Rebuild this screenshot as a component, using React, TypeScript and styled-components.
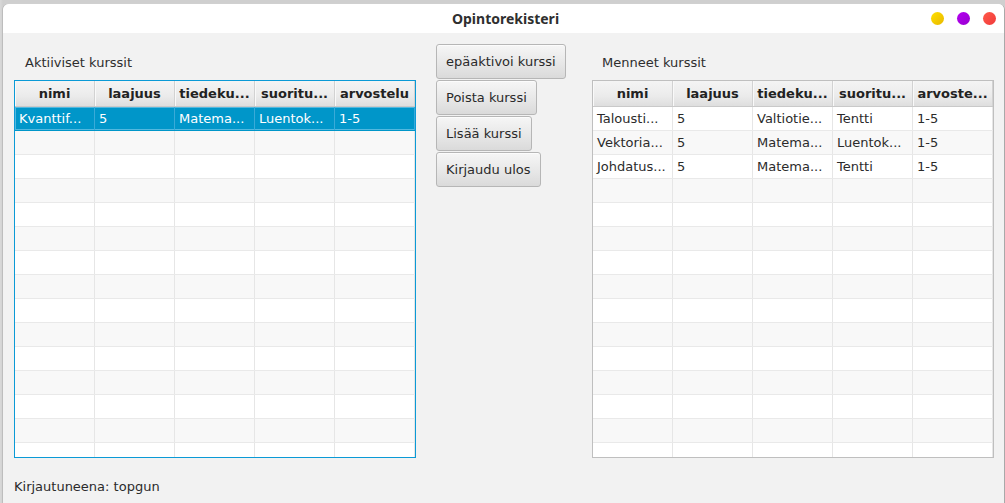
import React from "react";
import styled, { createGlobalStyle } from "styled-components";

const GlobalStyle = createGlobalStyle`
  html, body { margin: 0; padding: 0; }
  body {
    background: #dcdcdc;
    font-family: "DejaVu Sans", "Liberation Sans", sans-serif;
  }
  * { box-sizing: border-box; }
`;

const Desktop = styled.div`
  width: 1005px;
  height: 503px;
  padding: 4px 0 0 3px;
  background: linear-gradient(90deg, #d9d9d9 0, #cfcfcf 3px);
  overflow: hidden;
`;

const Window = styled.div`
  width: 1002px;
  height: 499px;
  display: flex;
  flex-direction: column;
  border-radius: 6px 6px 0 0;
  overflow: hidden;
  border-right: 1px solid #a9a9a9;
  box-shadow: -1px 0 0 #bdbdbd, 0 -1px 0 #d0d0d0;
  background: #f2f2f2;
`;

const TitleBar = styled.div`
  height: 29px;
  flex: none;
  background: #ffffff;
  display: grid;
  grid-template-columns: 1fr auto 1fr;
  align-items: center;
`;

const Title = styled.div`
  grid-column: 2;
  font-family: "Noto Sans", "DejaVu Sans", sans-serif;
  font-weight: 700;
  font-size: 14px;
  color: #2f2f2f;
  padding-left: 4px;
`;

const Controls = styled.div`
  grid-column: 3;
  justify-self: end;
  display: flex;
  gap: 13px;
  padding-right: 8px;
`;

const Dot = styled.span<{ $c1: string; $c2: string }>`
  width: 13px;
  height: 13px;
  border-radius: 50%;
  background: linear-gradient(135deg, ${(p) => p.$c1}, ${(p) => p.$c2});
`;

const Content = styled.div`
  flex: 1;
  display: flex;
  flex-direction: column;
  padding: 0 0 0 11px;
`;

const Main = styled.div`
  display: flex;
  align-items: flex-start;
`;

const Column = styled.div`
  width: 402px;
  display: flex;
  flex-direction: column;
`;

const SectionLabel = styled.div<{ $indent: number }>`
  font-size: 13px;
  line-height: 16px;
  color: #2e2e2e;
  padding: 22px 0 0 ${(p) => p.$indent}px;
  height: 47px;
`;

const ButtonStack = styled.div`
  width: 131px;
  margin: 11px 25px 0 20px;
  display: flex;
  flex-direction: column;
  align-items: flex-start;
  gap: 1px;
`;

const Button = styled.button`
  height: 35px;
  padding: 0 9px;
  font-family: "DejaVu Sans", sans-serif;
  font-size: 13px;
  color: #2a2a2a;
  background: linear-gradient(180deg, #f6f6f6 0%, #e6e6e6 60%, #dadada 100%);
  border: 1px solid #b6b6b6;
  border-radius: 3px;
  box-shadow: inset 0 1px 0 #fcfcfc;
  white-space: nowrap;
  cursor: default;
`;

const Table = styled.div<{ $focused?: boolean }>`
  width: 402px;
  height: 378px;
  border: 1px solid ${(p) => (p.$focused ? "#0b9ad6" : "#bfbfbf")};
  background: #ffffff;
  overflow: hidden;
  display: flex;
  flex-direction: column;
`;

const HeaderRow = styled.div`
  display: grid;
  grid-template-columns: repeat(5, 80px);
  height: 26px;
  flex: none;
  background: linear-gradient(180deg, #f4f4f4 0%, #ebebeb 60%, #dedede 100%);
  border-bottom: 1px solid #c9c9c9;
`;

const HeaderCell = styled.div`
  font-size: 13px;
  font-weight: 700;
  color: #222;
  display: flex;
  align-items: center;
  justify-content: center;
  border-right: 1px solid #d2d2d2;
  box-shadow: inset 1px 0 0 #f9f9f9;
  white-space: nowrap;
  overflow: hidden;
`;

const Body = styled.div`
  flex: 1;
  overflow: hidden;
`;

const Row = styled.div<{ $odd: boolean; $selected?: boolean }>`
  display: grid;
  grid-template-columns: repeat(5, 80px);
  height: 24px;
  background: ${(p) => (p.$selected ? "#0096c9" : p.$odd ? "#f8f8f8" : "#ffffff")};
  box-shadow: ${(p) => (p.$selected ? "inset 0 0 0 1px #52b8df" : "none")};
  border-bottom: 1px solid ${(p) => (p.$selected ? "#0096c9" : "#e9e9e9")};
`;

const Cell = styled.div<{ $selected?: boolean }>`
  font-size: 13px;
  line-height: 23px;
  padding-left: 4px;
  color: ${(p) => (p.$selected ? "#ffffff" : "#2b2b2b")};
  border-right: 1px solid ${(p) => (p.$selected ? "#3aaad8" : "#e6e6e6")};
  white-space: nowrap;
  overflow: hidden;
`;

const Footer = styled.div`
  font-size: 13px;
  line-height: 16px;
  color: #2b2b2b;
  margin-top: 21px;
`;

const headers = ["nimi", "laajuus", "tiedeku...", "suoritu...", "arvostelu"];
const pastHeaders = ["nimi", "laajuus", "tiedeku...", "suoritu...", "arvoste..."];

const active = [["Kvanttif...", "5", "Matema...", "Luentok...", "1-5"]];
const past = [
  ["Talousti...", "5", "Valtiotie...", "Tentti", "1-5"],
  ["Vektoria...", "5", "Matema...", "Luentok...", "1-5"],
  ["Johdatus...", "5", "Matema...", "Tentti", "1-5"],
];

const ROWS = 15;

function DataTable({
  cols,
  data,
  focused,
  selectedIndex,
}: {
  cols: string[];
  data: string[][];
  focused?: boolean;
  selectedIndex?: number;
}) {
  return (
    <Table $focused={focused}>
      <HeaderRow>
        {cols.map((c, i) => (
          <HeaderCell key={i}>{c}</HeaderCell>
        ))}
      </HeaderRow>
      <Body>
        {Array.from({ length: ROWS }).map((_, r) => {
          const sel = r === selectedIndex;
          const row = data[r];
          return (
            <Row key={r} $odd={r % 2 === 1} $selected={sel}>
              {Array.from({ length: 5 }).map((__, c) => (
                <Cell key={c} $selected={sel}>
                  {row ? row[c] : ""}
                </Cell>
              ))}
            </Row>
          );
        })}
      </Body>
    </Table>
  );
}

export default function App() {
  return (
    <>
      <GlobalStyle />
      <Desktop>
        <Window>
          <TitleBar>
            <Title>Opintorekisteri</Title>
            <Controls>
              <Dot $c1="#ffe000" $c2="#e8b800" />
              <Dot $c1="#b400f0" $c2="#9800d0" />
              <Dot $c1="#ff5a4a" $c2="#f03a3a" />
            </Controls>
          </TitleBar>
          <Content>
            <Main>
              <Column>
                <SectionLabel $indent={11}>Aktiiviset kurssit</SectionLabel>
                <DataTable cols={headers} data={active} focused selectedIndex={0} />
              </Column>
              <ButtonStack>
                <Button>epäaktivoi kurssi</Button>
                <Button>Poista kurssi</Button>
                <Button>Lisää kurssi</Button>
                <Button>Kirjaudu ulos</Button>
              </ButtonStack>
              <Column>
                <SectionLabel $indent={10}>Menneet kurssit</SectionLabel>
                <DataTable cols={pastHeaders} data={past} />
              </Column>
            </Main>
            <Footer>Kirjautuneena: topgun</Footer>
          </Content>
        </Window>
      </Desktop>
    </>
  );
}
